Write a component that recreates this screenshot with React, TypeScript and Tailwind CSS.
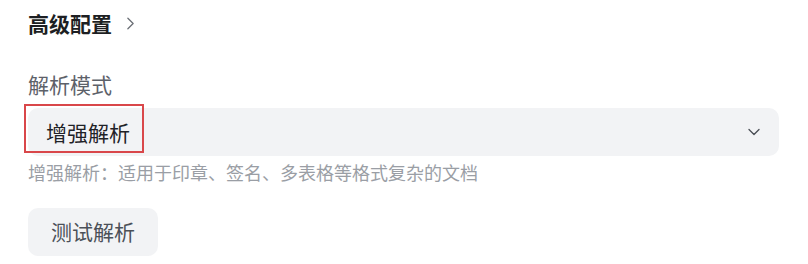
import React from 'react';
import { ChevronRight, ChevronDown } from 'lucide-react';

const font = { fontFamily: '"Noto Sans CJK SC", "Noto Sans", sans-serif' };

function App() {
  return (
    <div className="min-h-screen w-[808px] h-[264px] bg-white pl-[28px] pt-[8px]" style={font}>
      <div className="flex items-center gap-[8px] h-[30px]">
        <span className="text-[21px] leading-[30px] font-bold text-[#1d1f23]">高级配置</span>
        <ChevronRight className="w-[21px] h-[21px] text-[#6b6f76]" strokeWidth={1.5} />
      </div>

      <div className="mt-[31px] text-[21px] leading-[30px] text-[#5d6169]">解析模式</div>

      <div className="relative mt-[9px] w-[751px] h-[48px] rounded-[10px] bg-[#f2f3f5] flex items-center justify-between pl-[18px] pr-[15px]">
        <span className="text-[21px] leading-[30px] text-[#1f2227]">增强解析</span>
        <ChevronDown className="w-[20px] h-[20px] text-[#4b4f56]" strokeWidth={1.6} />
        <div className="absolute left-[-4px] top-[-4px] w-[120px] h-[49px] border-2 border-[#d9474a] pointer-events-none" />
      </div>

      <div className="mt-[3px] text-[18px] leading-[26px] text-[#9a9ea5]">
        增强解析：适用于印章、签名、多表格等格式复杂的文档
      </div>

      <button className="mt-[23px] h-[48px] w-[130px] rounded-[10px] bg-[#f2f3f5] text-[21px] text-[#4b5058] flex items-center justify-center">
        测试解析
      </button>
    </div>
  );
}

export default App;
